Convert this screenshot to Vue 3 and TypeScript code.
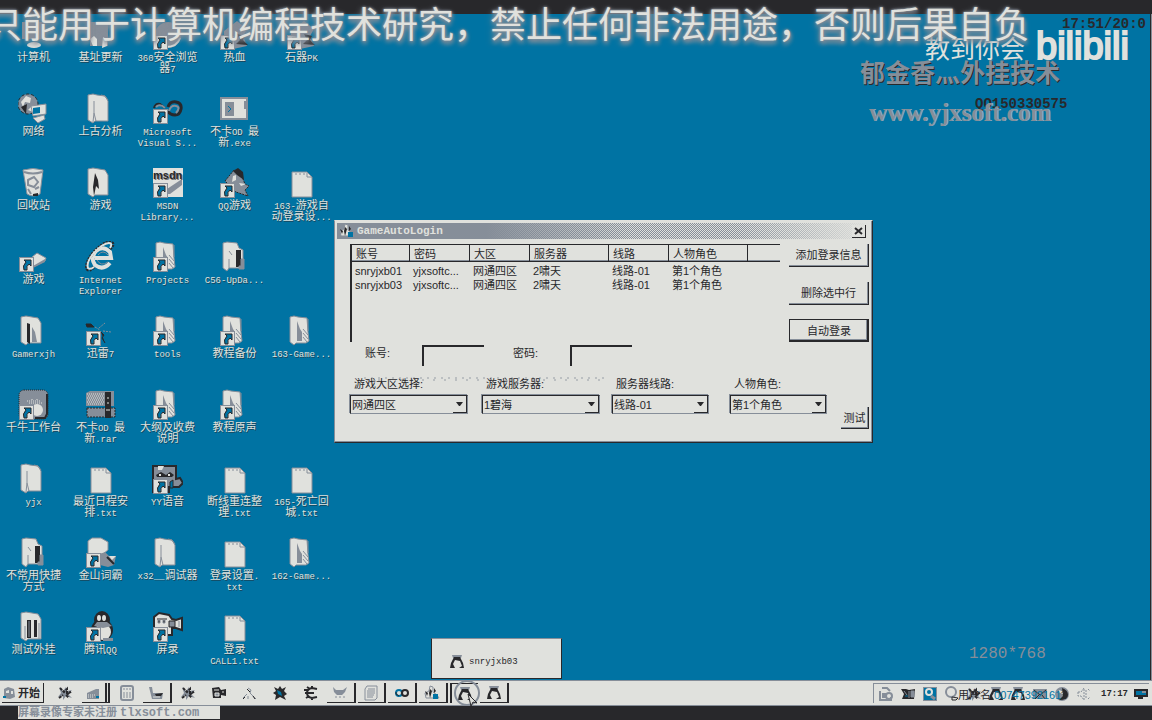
<script setup lang="ts">
import { ref } from 'vue'

interface Shortcut {
  col: number
  row: number
  icon: string
  lines: string[]
  link?: boolean
}

interface Segment {
  text: string
  latin: boolean
}

const shortcuts: Shortcut[] = [
  { col: 1, row: 1, icon: 'computer', lines: ['计算机'] },
  { col: 2, row: 1, icon: 'gear', lines: ['基址更新'] },
  { col: 3, row: 1, icon: 'globe', lines: ['360安全浏览', '器7'], link: true },
  { col: 4, row: 1, icon: 'blade', lines: ['热血'], link: true },
  { col: 5, row: 1, icon: 'blade', lines: ['石器PK'], link: true },
  { col: 1, row: 2, icon: 'network', lines: ['网络'] },
  { col: 2, row: 2, icon: 'folder', lines: ['上古分析'] },
  { col: 3, row: 2, icon: 'infinity', lines: ['Microsoft', 'Visual S...'], link: true },
  { col: 4, row: 2, icon: 'exe', lines: ['不卡OD 最', '新.exe'] },
  { col: 1, row: 3, icon: 'bin', lines: ['回收站'] },
  { col: 2, row: 3, icon: 'folder-game', lines: ['游戏'] },
  { col: 3, row: 3, icon: 'msdn', lines: ['MSDN', 'Library...'], link: true },
  { col: 4, row: 3, icon: 'qqgame', lines: ['QQ游戏'], link: true },
  { col: 5, row: 3, icon: 'doc', lines: ['163-游戏自', '动登录设...'] },
  { col: 1, row: 4, icon: 'cone', lines: ['游戏'], link: true },
  { col: 2, row: 4, icon: 'ie', lines: ['Internet', 'Explorer'] },
  { col: 3, row: 4, icon: 'folder-full', lines: ['Projects'], link: true },
  { col: 4, row: 4, icon: 'folder-tool', lines: ['C56-UpDa...'] },
  { col: 1, row: 5, icon: 'folder-dark', lines: ['Gamerxjh'] },
  { col: 2, row: 5, icon: 'thunder', lines: ['迅雷7'], link: true },
  { col: 3, row: 5, icon: 'folder-full', lines: ['tools'], link: true },
  { col: 4, row: 5, icon: 'folder-full', lines: ['教程备份'], link: true },
  { col: 5, row: 5, icon: 'folder-full', lines: ['163-Game...'] },
  { col: 1, row: 6, icon: 'qianniu', lines: ['千牛工作台'], link: true },
  { col: 2, row: 6, icon: 'rar', lines: ['不卡OD 最', '新.rar'] },
  { col: 3, row: 6, icon: 'folder-full', lines: ['大纲及收费', '说明'], link: true },
  { col: 4, row: 6, icon: 'folder-full', lines: ['教程原声'], link: true },
  { col: 1, row: 7, icon: 'folder', lines: ['yjx'] },
  { col: 2, row: 7, icon: 'doc', lines: ['最近日程安', '排.txt'] },
  { col: 3, row: 7, icon: 'yy', lines: ['YY语音'], link: true },
  { col: 4, row: 7, icon: 'doc', lines: ['断线重连整', '理.txt'] },
  { col: 5, row: 7, icon: 'doc', lines: ['165-死亡回', '城.txt'] },
  { col: 1, row: 8, icon: 'folder-tool', lines: ['不常用快捷', '方式'] },
  { col: 2, row: 8, icon: 'ciba', lines: ['金山词霸'], link: true },
  { col: 3, row: 8, icon: 'folder', lines: ['x32__调试器'] },
  { col: 4, row: 8, icon: 'doc', lines: ['登录设置.', 'txt'] },
  { col: 5, row: 8, icon: 'folder-full', lines: ['162-Game...'] },
  { col: 1, row: 9, icon: 'folder-two', lines: ['测试外挂'] },
  { col: 2, row: 9, icon: 'penguin', lines: ['腾讯QQ'], link: true },
  { col: 3, row: 9, icon: 'camera', lines: ['屏录'], link: true },
  { col: 4, row: 9, icon: 'doc', lines: ['登录', 'CALL1.txt'] },
]

function segments(line: string): Segment[] {
  const parts = line.match(/[\x20-\x7e]+|[^\x20-\x7e]+/g) ?? []
  return parts.map((text) => ({ text, latin: /^[\x20-\x7e]/.test(text) }))
}

const headers: string[] = ['账号', '密码', '大区', '服务器', '线路', '人物角色', '']
const accounts: string[][] = [
  ['snryjxb01', 'yjxsoftc...', '网通四区', '2啸天', '线路-01', '第1个角色', ''],
  ['snryjxb03', 'yjxsoftc...', '网通四区', '2啸天', '线路-01', '第1个角色', ''],
]

const account = ref('')
const password = ref('')

const combos = [
  { id: 'zone', label: '游戏大区选择:', value: '网通四区', size: 'wide' },
  { id: 'server', label: '游戏服务器:', value: '1碧海', size: 'wide' },
  { id: 'line', label: '服务器线路:', value: '线路-01', size: 'slim' },
  { id: 'role', label: '人物角色:', value: '第1个角色', size: 'slim' },
]

const tasks: { icon: string; name: string; state: string }[] = [
  { icon: 't-star', name: '助手', state: '' },
  { icon: 't-drive', name: '资源管理器', state: 'raised stacked' },
  { icon: 't-calc', name: '计算器', state: '' },
  { icon: 't-cup', name: '工具', state: 'raised' },
  { icon: 't-star', name: '调试', state: '' },
  { icon: 't-cam', name: '录像', state: '' },
  { icon: 't-fan', name: '分析', state: '' },
  { icon: 't-bug', name: '监视', state: '' },
  { icon: 't-ce', name: '修改器', state: '' },
  { icon: 't-crab', name: '游戏', state: 'raised' },
  { icon: 't-note', name: '记事本', state: 'raised' },
  { icon: 't-inf', name: 'Visual Studio', state: 'raised' },
  { icon: 't-mfc', name: 'GameAutoLogin', state: 'raised' },
  { icon: 't-peng', name: 'snryjxb03', state: 'pressed' },
  { icon: 't-peng', name: 'snryjxb01', state: 'raised' },
]

const tray: string[] = ['t-net', 't-dark', 't-blue', 't-chat', 't-star', 't-peng', 't-peng', 't-mail', 't-ball', 't-vol']
</script>

<template>
  <div class="screen">
    <svg class="defs" aria-hidden="true">
      <symbol id="arrow" viewBox="0 0 15 15">
        <path d="M0 0H15V15H0Z" fill="#868e99" />
        <path d="M1 1H14V14H1Z" fill="#e0e1dd" />
        <path d="M5 3H12V9L10 7Q7 9 8 13H5Q3 9 7 5Z" fill="#0073a3" stroke="#28282b" stroke-width="1" />
      </symbol>
      <symbol id="folder" viewBox="0 0 31 31">
        <path d="M3 2L8 1L12 2L20 3L23 8V28H10L8 30L3 27Z" fill="#e0e1dd" stroke="#868e99" />
        <path d="M9 8V20L8 29M16 2L20 3L23 7M9 20L11 28" fill="none" stroke="#868e99" />
      </symbol>
      <symbol id="folder-full" viewBox="0 0 31 31">
        <path d="M4 2L8 1L12 2L21 3L22 17L23 26L20 28H10L8 30L4 27Z" fill="#e0e1dd" stroke="#868e99" />
        <path d="M11 6L14 14L16 17V26H11Z" fill="#868e99" />
        <path d="M17 14L22 20M17 18L22 24M17 22L21 27M22 4V16" stroke="#868e99" />
      </symbol>
      <symbol id="folder-game" viewBox="0 0 31 31">
        <path d="M3 2L8 1L20 3L23 8V28H10L8 30L3 27Z" fill="#e0e1dd" stroke="#868e99" />
        <path d="M10 6L13 13L14 22L11 19L9 29L8 20Z" fill="#28282b" />
      </symbol>
      <symbol id="folder-tool" viewBox="0 0 31 31">
        <path d="M4 2L8 1L18 2L20 7L24 9V27H10L8 30L4 27Z" fill="#e0e1dd" stroke="#868e99" />
        <path d="M17 9H22V26H17Z" fill="#28282b" />
        <path d="M22 18H25V28H20V25H22ZM10 10L13 14M10 18V27" fill="#868e99" stroke="#868e99" />
      </symbol>
      <symbol id="folder-dark" viewBox="0 0 31 31">
        <path d="M3 2L8 1L20 3L23 8V28H10L8 30L3 27Z" fill="#e0e1dd" stroke="#868e99" />
        <path d="M9 8L12 9V29L9 27Z" fill="#28282b" />
        <path d="M14 12L17 17L19 27H14Z" fill="#868e99" />
      </symbol>
      <symbol id="folder-two" viewBox="0 0 31 31">
        <path d="M3 2L8 1L20 3L23 8V28H10L8 30L3 27Z" fill="#e0e1dd" stroke="#868e99" />
        <path d="M9 9H13V27H9ZM16 9H19V26H16Z" fill="#28282b" />
        <path d="M11 10V26M21 12V28M7 15V28" stroke="#868e99" />
      </symbol>
      <symbol id="doc" viewBox="0 0 31 31">
        <path d="M6 5H21L26 10V30H6Z" fill="#e0e1dd" stroke="#868e99" />
        <path d="M21 6V10H26M10 6V8M14 6V8M18 6V8" fill="none" stroke="#868e99" />
      </symbol>
      <symbol id="computer" viewBox="0 0 31 31">
        <path d="M4 3H27V20H4Z" fill="#868e99" />
        <ellipse cx="16" cy="26" rx="7" ry="3" fill="#e0e1dd" />
      </symbol>
      <symbol id="gear" viewBox="0 0 31 31">
        <path d="M5 3H23V27H5Z" fill="#868e99" />
        <path d="M5 20L9 17L12 20V27H8ZM18 18L22 20V27L17 29Z" fill="#e0e1dd" />
      </symbol>
      <symbol id="globe" viewBox="0 0 31 31">
        <circle cx="16" cy="16" r="13" fill="#868e99" />
        <path d="M14 28Q25 28 28 19" fill="none" stroke="#e0e1dd" stroke-width="2" />
      </symbol>
      <symbol id="blade" viewBox="0 0 31 31">
        <path d="M5 12L18 2L28 10L24 17L28 27L14 30L5 25Z" fill="#868e99" />
        <path d="M18 15L26 17L24 21L29 26L17 25L21 21Z" fill="#28282b" />
      </symbol>
      <symbol id="network" viewBox="0 0 31 31">
        <circle cx="10" cy="11" r="10" fill="#868e99" stroke="#28282b" stroke-dasharray="3 2" />
        <path d="M3 9L8 3L13 5L12 10L7 9L5 14ZM10 17L14 13L15 19Z" fill="#e0e1dd" />
        <path d="M3 14L9 11L8 21Z" fill="#28282b" />
        <path d="M13 13L28 11V21L15 23Z" fill="#e0e1dd" stroke="#868e99" />
        <path d="M15 15L22 14V20L15 21Z" fill="#0073a3" />
        <path d="M15 25L26 22L27 26L20 30Z" fill="#e0e1dd" stroke="#868e99" />
      </symbol>
      <symbol id="infinity" viewBox="0 0 31 31">
        <path d="M2 15Q3 10 8 11L13 15" fill="none" stroke="#28282b" stroke-width="2" />
        <path d="M16 14Q18 8 24 9T29 16Q28 22 23 22Q18 22 16 18" fill="none" stroke="#28282b" stroke-width="3" />
        <path d="M4 14Q8 10 13 15M17 18Q19 12 24 13T24 20" fill="none" stroke="#868e99" stroke-width="2" />
      </symbol>
      <symbol id="exe" viewBox="0 0 31 31">
        <path d="M2 5H28V26H2Z" fill="#e0e1dd" stroke="#868e99" stroke-width="2" />
        <path d="M6 9H15V23H6ZM25 8H27V16H25Z" fill="#868e99" />
        <path d="M9 13L12 16L9 19" fill="none" stroke="#0073a3" />
      </symbol>
      <symbol id="bin" viewBox="0 0 31 31">
        <path d="M5 3Q15 0 25 3L22 27Q15 31 9 27Z" fill="#e0e1dd" stroke="#868e99" />
        <path d="M6 5Q15 8 24 5M10 13L16 10L20 15L16 20L10 18ZM10 22L13 27M17 22L21 20" fill="none" stroke="#868e99" stroke-width="2" />
        <path d="M15 27L20 26V29H15Z" fill="#28282b" />
      </symbol>
      <symbol id="msdn" viewBox="0 0 31 31">
        <path d="M1 1H31V30H1Z" fill="#e0e1dd" />
        <path d="M15 22L30 12V18L18 27H15Z" fill="#868e99" />
        <text x="1" y="12" font-family="Liberation Sans" font-size="11" font-weight="700" fill="#28282b">msdn</text>
      </symbol>
      <symbol id="qqgame" viewBox="0 0 31 31">
        <path d="M6 14L15 3L22 7L26 17L30 19L26 23L29 29L17 25Z" fill="#868e99" stroke="#28282b" stroke-dasharray="2 1" />
        <path d="M14 4L19 1L24 5L25 13L18 8Z" fill="#28282b" />
        <path d="M14 9L17 8V13L13 15ZM20 16L27 17L22 19Z" fill="#e0e1dd" />
      </symbol>
      <symbol id="cone" viewBox="0 0 31 31">
        <path d="M14 16L19 12L28 17L27 20L15 26Z" fill="#e0e1dd" stroke="#868e99" />
        <path d="M15 25L27 18V21L15 27Z" fill="#868e99" />
      </symbol>
      <symbol id="ie" viewBox="0 0 31 31">
        <path d="M25 22Q18 30 10 24Q5 17 11 10Q18 4 25 11L26 17H10" fill="none" stroke="#e0e1dd" stroke-width="4" />
        <path d="M25 8Q31 2 25 1Q18 1 8 12Q0 22 2 28Q4 31 9 26" fill="none" stroke="#28282b" stroke-width="3" stroke-dasharray="2 1" />
        <path d="M25 7Q28 2 24 2Q18 2 8 13Q1 22 3 27Q5 29 9 26" fill="none" stroke="#e0e1dd" stroke-width="2" />
        <path d="M13 14Q18 8 23 14M12 19Q16 26 23 21" fill="none" stroke="#868e99" />
      </symbol>
      <symbol id="thunder" viewBox="0 0 31 31">
        <path d="M1 9H6L9 12H2ZM16 17L19 20L17 23L20 28" fill="#28282b" stroke="#28282b" />
        <path d="M14 13L20 8M18 16L26 17M10 12L15 15" stroke="#868e99" fill="none" stroke-dasharray="2 1" />
      </symbol>
      <symbol id="qianniu" viewBox="0 0 31 31">
        <rect x="1" y="1" width="29" height="29" rx="5" fill="#868e99" stroke="#28282b" stroke-dasharray="1 1" />
        <path d="M29 5V25L27 29H17" fill="none" stroke="#28282b" stroke-width="2" />
        <circle cx="19" cy="21" r="6" fill="#e0e1dd" />
        <path d="M9 12H22M11 14H24M14 10V12M19 10V12" stroke="#e0e1dd" stroke-dasharray="1 1" />
      </symbol>
      <symbol id="rar" viewBox="0 0 31 31">
        <path d="M1 4L5 2H29V17H1Z" fill="#868e99" />
        <path d="M2 5H19M3 7H19M2 9H19M3 11H19M2 13H19M3 15H19" stroke="#e0e1dd" stroke-dasharray="1 1" />
        <path d="M2 19H30V28H2Z" fill="#868e99" stroke="#28282b" stroke-dasharray="2 1" />
        <path d="M20 3H26V29H20Z" fill="#28282b" />
        <path d="M22 9H24M22 14H24M21 21H25" stroke="#e0e1dd" />
      </symbol>
      <symbol id="yy" viewBox="0 0 31 31">
        <path d="M1 3H24V16L28 15L31 20L27 24H17V29H1Z" fill="#868e99" stroke="#28282b" stroke-width="2" />
        <path d="M6 3H12L10 7H6Z" fill="#e0e1dd" />
        <path d="M4 12L9 9L14 12L18 9L22 12L20 14H5Z" fill="#28282b" />
        <path d="M7 12H9M16 12H18" stroke="#e0e1dd" stroke-width="2" />
        <path d="M18 19L21 17V25H18Z" fill="#0073a3" stroke="#28282b" />
      </symbol>
      <symbol id="ciba" viewBox="0 0 31 31">
        <path d="M3 4L7 1L16 1L23 5L23 13L18 17H3Z" fill="#e0e1dd" stroke="#868e99" />
        <path d="M15 17L20 15L24 19H31L29 28L23 30L15 28Z" fill="#868e99" />
        <path d="M22 20L29 27" stroke="#28282b" stroke-width="2" fill="none" />
        <path d="M24 19H31L27 23Z" fill="#e0e1dd" />
      </symbol>
      <symbol id="penguin" viewBox="0 0 31 31">
        <ellipse cx="17" cy="19" rx="11" ry="11" fill="#28282b" />
        <ellipse cx="17" cy="9" rx="8" ry="9" fill="#28282b" />
        <ellipse cx="18" cy="21" rx="8" ry="8" fill="#e0e1dd" />
        <ellipse cx="14" cy="7" rx="2" ry="3" fill="#e0e1dd" />
        <ellipse cx="19" cy="7" rx="2" ry="3" fill="#e0e1dd" />
        <path d="M12 11L22 11L27 15L18 17L9 15ZM18 27H28V30H18Z" fill="#868e99" />
      </symbol>
      <symbol id="camera" viewBox="0 0 31 31">
        <path d="M2 6L7 2L17 4L20 8L24 9L30 7V19L24 17H20V24H2Z" fill="#e0e1dd" stroke="#28282b" stroke-width="2" />
        <path d="M17 10H23V16H17ZM5 8H15" fill="#868e99" stroke="#28282b" />
        <path d="M6 9H8V12H6ZM11 9H13V12H11ZM27 10V16" fill="#28282b" stroke="#868e99" />
      </symbol>

      <symbol id="t-star" viewBox="0 0 16 16">
        <path d="M2 2L6 6L9 2L10 6L15 5L11 9L15 13L9 11L6 15L6 11L1 12L4 8Z" fill="#868e99" />
        <path d="M3 3L7 7L10 4V8L14 7L9 10L12 13M2 13L6 10" fill="none" stroke="#28282b" stroke-width="2" stroke-dasharray="3 1" />
      </symbol>
      <symbol id="t-drive" viewBox="0 0 16 16">
        <path d="M2 8L11 4H14V14H2Z" fill="#868e99" />
        <path d="M3 10H10M3 12H9" stroke="#e0e1dd" stroke-dasharray="1 1" />
        <path d="M11 11H14V13H11Z" fill="#0073a3" />
      </symbol>
      <symbol id="t-calc" viewBox="0 0 16 16">
        <rect x="2" y="1" width="12" height="14" rx="2" fill="#e0e1dd" stroke="#868e99" stroke-width="2" />
        <path d="M4 4H12M4 8H12M4 10H12M4 12H12" stroke="#868e99" stroke-width="1" stroke-dasharray="2 1" />
      </symbol>
      <symbol id="t-cup" viewBox="0 0 16 16">
        <path d="M1 2H4L5 8H15L14 14H4Z" fill="#868e99" />
        <path d="M7 9L15 8L13 11H8Z" fill="#28282b" />
        <path d="M5 12H12" stroke="#e0e1dd" />
      </symbol>
      <symbol id="t-cam" viewBox="0 0 16 16">
        <path d="M1 3L8 2L10 5L15 4V11L10 10V13H2Z" fill="#28282b" />
        <path d="M3 5H8M4 8H8V11H4ZM11 7H13" fill="#868e99" stroke="#e0e1dd" />
      </symbol>
      <symbol id="t-fan" viewBox="0 0 16 16">
        <path d="M2 13L6 9M7 3L10 5L9 8L15 14M7 11V14" fill="none" stroke="#868e99" />
        <path d="M6 4L9 7M12 11L14 14M2 14L4 12" stroke="#28282b" />
      </symbol>
      <symbol id="t-bug" viewBox="0 0 16 16">
        <path d="M2 2L6 4L8 1L10 4L14 2L12 6L15 9L12 11L14 15L8 12L3 15L4 10L1 8L4 6Z" fill="#28282b" />
        <path d="M5 5L9 7L10 11L6 9Z" fill="#0073a3" />
      </symbol>
      <symbol id="t-ce" viewBox="0 0 16 16">
        <path d="M14 4L9 3Q4 4 4 8T9 13L14 12M2 8H11M4 2L7 4M1 5H5M3 13L6 11M9 1V4M9 12V15" fill="none" stroke="#28282b" stroke-width="2" />
      </symbol>
      <symbol id="t-crab" viewBox="0 0 16 16">
        <path d="M1 2L4 5H11L15 2L13 7L10 10H5L2 7Z" fill="#868e99" />
        <path d="M3 12H5M7 12H9M11 12H13" stroke="#868e99" />
      </symbol>
      <symbol id="t-note" viewBox="0 0 16 16">
        <path d="M4 1H14V13L12 15H2V4ZM5 4H12M4 6H12M4 8H12M4 10H11M4 12H10" fill="none" stroke="#868e99" />
      </symbol>
      <symbol id="t-inf" viewBox="0 0 16 16">
        <circle cx="5" cy="8" r="3" fill="none" stroke="#0073a3" stroke-width="2" />
        <circle cx="11" cy="8" r="3" fill="none" stroke="#28282b" stroke-width="2" />
        <path d="M2 7V9L5 11" fill="none" stroke="#28282b" />
      </symbol>
      <symbol id="t-mfc" viewBox="0 0 16 16">
        <path d="M6 1L9 2V7L13 10L15 13H2L1 8L5 6Z" fill="#e0e1dd" stroke="#868e99" />
        <path d="M1 6L4 8L3 11ZM6 4L8 6L6 13L5 8ZM10 3L12 6L10 8Z" fill="#28282b" />
        <path d="M9 9H14V14H9Z" fill="#0073a3" />
      </symbol>
      <symbol id="t-peng" viewBox="0 0 16 16">
        <path d="M3 1H13L12 4H4Z" fill="#868e99" />
        <path d="M5 3H11L14 9L15 14H10L13 12L11 7L6 6L4 10L6 14H1L2 9Z" fill="#28282b" />
        <path d="M5 10L8 8L11 10V13H6Z" fill="#e0e1dd" />
      </symbol>
      <symbol id="t-net" viewBox="0 0 16 16">
        <path d="M2 5V14H13V11M4 2H9L12 5" fill="none" stroke="#868e99" stroke-width="2" />
        <circle cx="11" cy="10" r="3" fill="none" stroke="#868e99" stroke-width="2" />
        <path d="M4 7H8V12H4Z" fill="#868e99" />
      </symbol>
      <symbol id="t-dark" viewBox="0 0 16 16">
        <path d="M1 3H6L9 4L15 3L14 13H2L4 8Z" fill="#28282b" />
        <path d="M4 5L7 9M9 5V12M11 5H14V11H11Z" stroke="#868e99" fill="#868e99" />
        <path d="M5 10H8" stroke="#0073a3" />
      </symbol>
      <symbol id="t-blue" viewBox="0 0 16 16">
        <rect x="1" y="1" width="14" height="14" fill="#868e99" />
        <rect x="2" y="2" width="12" height="12" fill="#0073a3" />
        <circle cx="7" cy="6" r="3" fill="none" stroke="#e0e1dd" stroke-width="2" />
        <path d="M9 10L13 13" stroke="#868e99" stroke-width="3" />
      </symbol>
      <symbol id="t-chat" viewBox="0 0 16 16">
        <circle cx="7" cy="6" r="5" fill="#e0e1dd" stroke="#868e99" stroke-width="2" />
        <path d="M8 11L14 12L12 14H8Z" fill="#e0e1dd" stroke="#28282b" />
      </symbol>
      <symbol id="t-mail" viewBox="0 0 16 16">
        <path d="M1 3H15V13H1Z" fill="#868e99" />
        <path d="M2 4L8 9L14 4M3 13L7 9M13 13L10 9" fill="none" stroke="#28282b" />
      </symbol>
      <symbol id="t-ball" viewBox="0 0 16 16">
        <circle cx="8" cy="8" r="7" fill="#868e99" />
        <path d="M8 2Q14 4 14 9T5 14L9 10Z" fill="#28282b" />
        <path d="M5 5L9 7" stroke="#e0e1dd" stroke-width="2" />
      </symbol>
      <symbol id="t-vol" viewBox="0 0 16 16">
        <path d="M2 6H5L8 2V14L5 10H2ZM10 4V12M12 3L14 5M12 13L14 11" fill="none" stroke="#868e99" stroke-dasharray="2 1" />
      </symbol>
    </svg>

    <div class="top-strip"></div>

    <main class="desktop">
      <div class="shortcuts">
        <button
          v-for="(item, i) in shortcuts"
          :key="i"
          type="button"
          class="shortcut"
          :style="{ gridColumn: item.col, gridRow: item.row }"
        >
          <span class="glyph">
            <svg class="picture" aria-hidden="true"><use :href="'#' + item.icon" /></svg>
            <svg v-if="item.link" class="link-mark" aria-hidden="true"><use href="#arrow" /></svg>
          </span>
          <span v-for="line in item.lines" :key="line" class="caption">
            <span v-for="(part, p) in segments(line)" :key="p" :class="{ latin: part.latin }">{{ part.text }}</span>
          </span>
        </button>
      </div>

      <section class="dialog" aria-label="GameAutoLogin">
        <header class="title-bar">
          <svg class="small-icon" aria-hidden="true"><use href="#t-mfc" /></svg>
          <h1>GameAutoLogin</h1>
          <button type="button" class="close" aria-label="关闭">
            <svg viewBox="0 0 9 8" width="9" height="8"><path d="M1 1L8 7M8 1L1 7" stroke="#28282b" stroke-width="2" /></svg>
          </button>
        </header>
        <div class="dialog-body">
          <div class="upper">
            <div class="list">
              <table>
                <colgroup>
                  <col class="c-s" /><col class="c-m" /><col class="c-m" /><col class="c-l" /><col class="c-m" /><col class="c-l" /><col />
                </colgroup>
                <thead>
                  <tr><th v-for="(h, i) in headers" :key="i" scope="col">{{ h }}</th></tr>
                </thead>
                <tbody>
                  <tr v-for="row in accounts" :key="row[0]">
                    <td v-for="(cell, i) in row" :key="i">{{ cell }}</td>
                  </tr>
                </tbody>
              </table>
            </div>
            <div class="actions">
              <button type="button" class="push">添加登录信息</button>
              <button type="button" class="push">删除选中行</button>
              <button type="button" class="push default">自动登录</button>
            </div>
          </div>
          <div class="credentials">
            <label for="account">账号:</label>
            <input id="account" v-model="account" type="text" />
            <label for="password">密码:</label>
            <input id="password" v-model="password" type="text" />
          </div>
          <div class="choices">
            <div v-for="c in combos" :key="c.id" class="choice" :class="c.size">
              <label :for="c.id">{{ c.label }}</label>
              <span class="combo">
                <select :id="c.id"><option>{{ c.value }}</option></select>
                <span class="drop" aria-hidden="true">
                  <svg viewBox="0 0 7 4" width="7" height="4"><path d="M0 0H7L4 4H3Z" fill="#28282b" /></svg>
                </span>
              </span>
            </div>
            <button type="button" class="push test">测试</button>
          </div>
        </div>
      </section>

      <p class="mark clock-mark">17:51/20:0</p>
      <p class="mark teach">教到你会</p>
      <p class="mark author">郁金香灬外挂技术</p>
      <p class="mark contact">QQ150330575</p>
      <p class="mark site">www.yjxsoft.com</p>
      <p class="mark brand">bilibili</p>
      <p class="mark size-mark">1280*768</p>

      <div class="preview">
        <svg class="small-icon" aria-hidden="true"><use href="#t-peng" /></svg>
        <span>snryjxb03</span>
      </div>
    </main>

    <footer class="taskbar">
      <button type="button" class="start">
        <svg viewBox="0 0 14 14" width="14" height="14" aria-hidden="true">
          <path d="M2 3L6 1L12 3L13 11L8 13L2 12Z" fill="#868e99" />
          <path d="M4 5L7 4V7H4ZM9 5H11V8H9Z" fill="#e0e1dd" />
          <path d="M1 10H4V12H1Z" fill="#0073a3" />
        </svg>
        <span>开始</span>
      </button>
      <nav class="tasks">
        <button v-for="(t, i) in tasks" :key="i" type="button" class="task" :class="t.state" :aria-label="t.name">
          <svg class="small-icon" aria-hidden="true"><use :href="'#' + t.icon" /></svg>
        </button>
        <svg class="pointer" viewBox="0 0 28 28" aria-hidden="true">
          <circle cx="13" cy="13" r="12" fill="none" stroke="#868e99" stroke-width="2" />
          <path d="M14 14L23 23L19 22L17 26Z" fill="#e0e1dd" stroke="#28282b" />
        </svg>
      </nav>
      <div class="tray">
        <svg v-for="(t, i) in tray" :key="i" class="small-icon" aria-hidden="true"><use :href="'#' + t" /></svg>
        <p class="tray-note">用户名:<span>00747392161</span>1</p>
        <time>17:17</time>
        <svg viewBox="0 0 15 12" width="15" height="12" aria-hidden="true">
          <path d="M0 1H14V9H9V11H4V9H0Z" fill="#28282b" />
          <path d="M2 3H12V7H2Z" fill="#0073a3" />
          <path d="M8 3H12V5H8Z" fill="#868e99" />
        </svg>
      </div>
    </footer>

    <div class="bottom-strip">
      <p>屏幕录像专家未注册 <span>tlxsoft.com</span></p>
    </div>

    <p class="banner">只能用于计算机编程技术研究，禁止任何非法用途，否则后果自负</p>
  </div>
</template>

<style>
html,
body {
  background: #28282b;
}
</style>

<style scoped>
.screen {
  --blue: #0073a3;
  --light: #e0e1dd;
  --grey: #868e99;
  --dark: #28282b;
  position: relative;
  display: flex;
  flex-direction: column;
  min-height: 100vh;
  overflow: hidden;
  background: var(--dark);
  color: var(--dark);
  font-family: "Liberation Sans", "Noto Sans CJK SC", sans-serif;
  font-size: 11px;
  line-height: 14px;
}
.defs {
  position: absolute;
  width: 0;
  height: 0;
}
p,
h1 {
  margin: 0;
}
button,
input,
select {
  margin: 0;
  padding: 0;
  border: 0;
  border-radius: 0;
  background: transparent;
  color: inherit;
  font: inherit;
}
.small-icon {
  width: 16px;
  height: 16px;
  flex: none;
}
.top-strip {
  height: 14px;
}
.desktop {
  position: relative;
  flex: 1;
  background: var(--blue);
  border-right: 1px solid var(--dark);
  box-shadow: 1px 0 0 var(--grey);
  margin-right: 1px;
}
.shortcuts {
  display: grid;
  grid-template-columns: repeat(5, 67px);
  grid-template-rows: repeat(9, 74px);
  height: 0;
  padding-top: 5px;
}
.shortcut {
  display: flex;
  flex-direction: column;
  align-items: center;
  justify-content: flex-start;
  color: var(--light);
  line-height: 11px;
  white-space: pre;
  text-shadow: 1px 1px 0 #28282b99;
}
.glyph {
  position: relative;
  width: 31px;
  height: 31px;
  margin-bottom: 2px;
}
.picture {
  display: block;
  width: 31px;
  height: 31px;
}
.link-mark {
  position: absolute;
  left: 1px;
  bottom: 0;
  width: 15px;
  height: 15px;
}
.caption {
  display: block;
  height: 11px;
}
.latin {
  font-family: "Liberation Mono", monospace;
  font-size: 9px;
}

.dialog {
  position: absolute;
  left: 334px;
  top: 206px;
  width: 539px;
  box-sizing: border-box;
  padding: 2px 2px 13px;
  background: var(--light);
  border: 1px solid;
  border-color: var(--light) var(--dark) var(--dark) var(--grey);
  box-shadow: inset -1px -1px 0 var(--grey);
}
.title-bar {
  display: flex;
  align-items: center;
  height: 16px;
  padding: 0 4px 0 2px;
  gap: 2px;
  background:
    linear-gradient(90deg, #868e99 28%, #868e9900 55%, #e0e1dd00 75%, #e0e1dd 100%),
    repeating-conic-gradient(#868e99 0% 25%, #e0e1dd 0% 50%) 0 0 / 2px 2px;
}
h1 {
  flex: 1;
  color: var(--light);
  font: bold 11px/16px "Liberation Mono", monospace;
}
.close {
  display: flex;
  align-items: center;
  justify-content: center;
  width: 14px;
  height: 13px;
  background: var(--light);
  border-right: 1px solid var(--dark);
  border-bottom: 1px solid var(--dark);
}
.dialog-body {
  padding: 5px 1px 0 13px;
}
.upper {
  display: flex;
  justify-content: space-between;
}
.list {
  width: 430px;
  height: 98px;
  box-sizing: border-box;
  border-left: 2px solid var(--dark);
  border-top: 1px solid var(--dark);
}
table {
  width: 100%;
  table-layout: fixed;
  border-collapse: separate;
  border-spacing: 0;
}
.c-s {
  width: 58px;
}
.c-m {
  width: 60px;
}
.c-l {
  width: 79px;
}
th {
  height: 17px;
  box-sizing: border-box;
  padding: 2px 0 0 4px;
  border-right: 1px solid var(--dark);
  border-bottom: 1px solid var(--dark);
  box-shadow: inset 0 -1px 0 var(--grey);
  font-weight: 400;
  text-align: left;
}
th:last-child {
  border-right: 0;
}
td {
  height: 14px;
  padding: 0 0 0 3px;
  white-space: nowrap;
}
tbody tr:first-child td {
  padding-top: 2px;
}
.actions {
  display: flex;
  flex-direction: column;
  justify-content: space-between;
  width: 80px;
}
.push {
  height: 23px;
  background: var(--light);
  border-right: 1px solid var(--dark);
  border-bottom: 1px solid var(--dark);
  box-shadow: inset -1px -1px 0 var(--grey);
  text-align: center;
}
.push.default {
  border: 1px solid var(--dark);
  box-shadow: inset -1px -1px 0 var(--dark), inset -2px -2px 0 var(--grey);
}
.credentials {
  display: grid;
  grid-template-columns: 57px 91px 57px 62px;
  height: 21px;
  padding: 3px 0 0 15px;
}
.credentials label {
  padding-top: 1px;
}
.credentials input {
  width: 62px;
  height: 21px;
  box-sizing: border-box;
  border-left: 2px solid var(--dark);
  border-top: 2px solid var(--dark);
}
.choices {
  position: relative;
  display: flex;
  align-items: flex-start;
  height: 52px;
  margin-top: 11px;
}
.choices::before {
  content: "";
  position: absolute;
  left: 14px;
  top: 0;
  width: 240px;
  height: 4px;
  background:
    radial-gradient(circle at 1px 1px, #868e99 1px, #868e9900 1px) 0 0 / 7px 4px,
    radial-gradient(circle at 4px 3px, #868e99 1px, #868e9900 1px) 0 0 / 11px 4px;
  opacity: 0.4;
}
.choice {
  display: flex;
  flex: none;
  flex-direction: column;
  gap: 4px;
  margin-right: 14px;
}
.choice label {
  position: relative;
  padding-left: 4px;
}
.choice.wide {
  width: 118px;
}
.choice.slim {
  width: 97px;
}
.choice.wide + .choice.slim {
  margin-left: -2px;
  margin-right: 21px;
}
.combo {
  position: relative;
  display: block;
  height: 19px;
  box-sizing: border-box;
  border: 1px solid var(--dark);
  border-color: var(--dark) var(--grey) var(--grey) var(--dark);
  box-shadow: -1px -1px 0 var(--grey);
}
.combo select {
  display: block;
  width: 100%;
  height: 17px;
  padding-left: 1px;
  appearance: none;
}
.drop {
  position: absolute;
  top: 0;
  right: 0;
  display: flex;
  align-items: center;
  justify-content: center;
  width: 13px;
  height: 16px;
  background: var(--light);
  border-right: 1px solid var(--dark);
  border-bottom: 1px solid var(--dark);
  pointer-events: none;
}
.push.test {
  align-self: flex-end;
  width: 28px;
  height: 22px;
  margin-left: auto;
}

.mark {
  position: absolute;
  white-space: nowrap;
  color: var(--grey);
}
.clock-mark {
  left: 1062px;
  top: 2px;
  color: var(--dark);
  font: bold 14px/16px "Liberation Mono", monospace;
}
.teach {
  left: 925px;
  top: 21px;
  color: var(--light);
  font-size: 25px;
  line-height: 28px;
}
.author {
  left: 860px;
  top: 44px;
  font-size: 25px;
  font-weight: 700;
  line-height: 30px;
  text-shadow: 1px 1px 0 var(--dark);
}
.contact {
  left: 975px;
  top: 82px;
  color: var(--dark);
  font: bold 14px/16px "Liberation Mono", monospace;
}
.site {
  left: 869px;
  top: 85px;
  font: bold 25px/28px "Liberation Serif", serif;
  text-shadow: 1px 0 0 #e0e1dd99;
}
.brand {
  left: 1036px;
  top: 10px;
  color: var(--light);
  font: 38px/44px "Liberation Sans", sans-serif;
  -webkit-text-stroke: 2px var(--light);
}
.size-mark {
  left: 969px;
  top: 631px;
  font: 16px/18px "Liberation Mono", monospace;
}
.preview {
  position: absolute;
  left: 431px;
  bottom: 1px;
  display: flex;
  align-items: center;
  width: 131px;
  height: 41px;
  box-sizing: border-box;
  padding: 7px 0 0 17px;
  gap: 4px;
  background: var(--light);
  border: 1px solid var(--dark);
  border-top-color: var(--grey);
  font: 9px/12px "Liberation Mono", monospace;
}

.taskbar {
  display: flex;
  align-items: center;
  height: 26px;
  box-sizing: border-box;
  padding: 0 3px 0 2px;
  background: var(--light);
  border-top: 1px solid var(--grey);
  border-bottom: 1px solid var(--grey);
}
.start {
  display: flex;
  align-items: center;
  gap: 2px;
  width: 42px;
  height: 20px;
  font-weight: 700;
  white-space: nowrap;
  border-right: 1px solid var(--dark);
  border-bottom: 1px solid var(--dark);
}
.tasks {
  position: relative;
  display: grid;
  grid-template-columns: repeat(15, 1fr);
  width: 460px;
  margin-left: 6px;
}
.task {
  display: flex;
  align-items: center;
  justify-content: center;
  height: 20px;
  margin: 0 1px;
}
.raised {
  border-right: 2px solid var(--dark);
  border-bottom: 1px solid var(--dark);
}
.stacked {
  border-right: 5px double var(--dark);
}
.pressed {
  border-left: 2px solid var(--dark);
  border-top: 1px solid var(--dark);
}
.pointer {
  position: absolute;
  right: 28px;
  top: -3px;
  width: 28px;
  height: 28px;
}
.tray {
  position: relative;
  display: flex;
  align-items: center;
  gap: 6px;
  margin-left: auto;
  height: 20px;
  box-sizing: border-box;
  padding-left: 4px;
  border-left: 1px solid var(--grey);
  border-top: 1px solid var(--grey);
}
.tray-note {
  position: absolute;
  left: 84px;
  top: 4px;
  white-space: nowrap;
  color: var(--dark);
}
.tray-note span {
  color: var(--blue);
}
.tray time {
  margin-left: 3px;
  font: bold 9px/12px "Liberation Mono", monospace;
}
.bottom-strip {
  height: 14px;
  padding-left: 18px;
}
.bottom-strip p {
  width: 202px;
  height: 13px;
  line-height: 13px;
  background: var(--light);
  color: var(--grey);
  font-weight: 700;
  white-space: nowrap;
}
.bottom-strip span {
  font: bold 12px/13px "Liberation Mono", monospace;
}
.banner {
  position: absolute;
  left: -14px;
  top: -1px;
  color: var(--light);
  font-family: "Noto Sans CJK SC", sans-serif;
  font-size: 36px;
  line-height: 46px;
  white-space: nowrap;
  text-shadow: 0 0 2px #868e99, 0 0 3px #868e99, 1px 3px 4px #868e99, -1px 2px 6px #868e99;
}
</style>
